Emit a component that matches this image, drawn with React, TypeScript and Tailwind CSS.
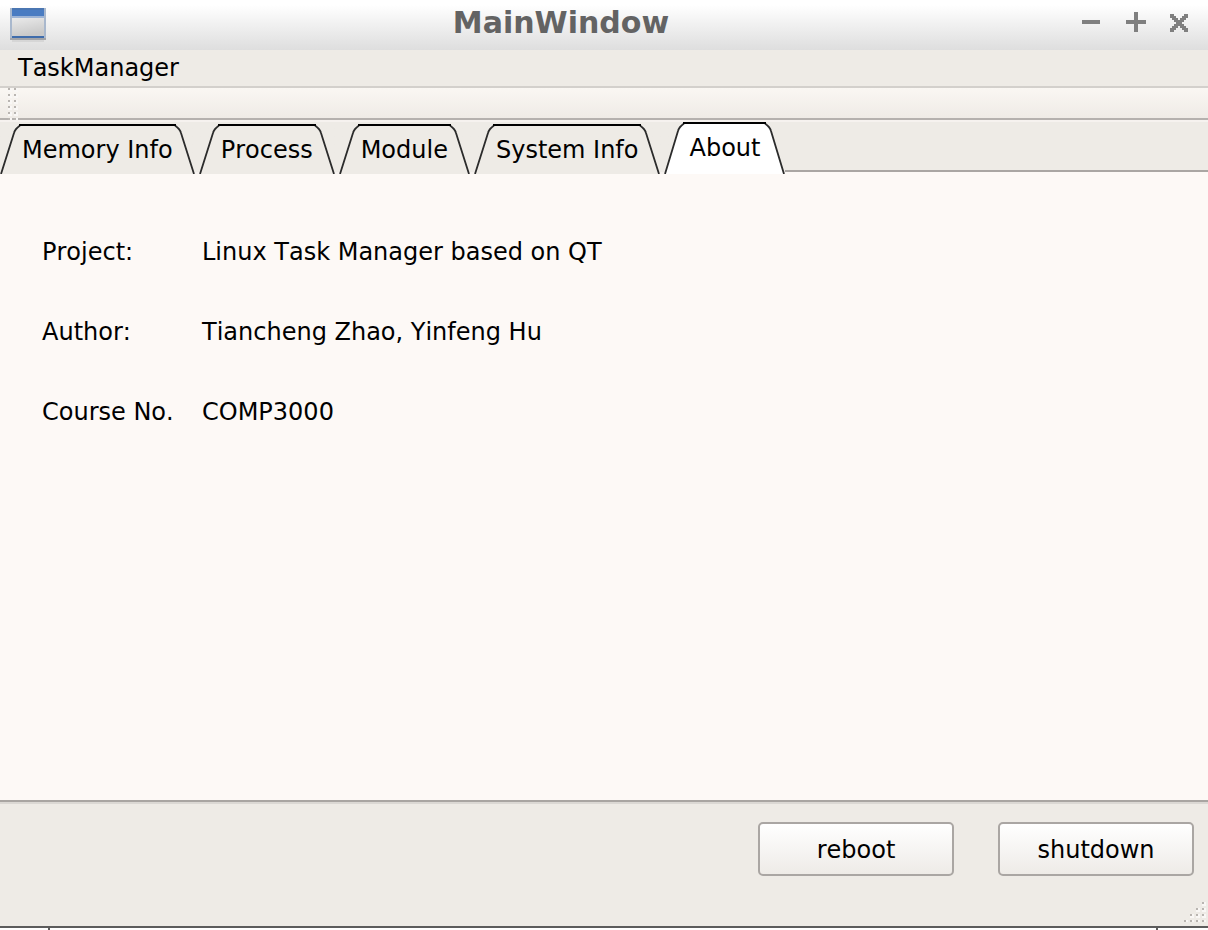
import { useState } from "react";

const TABS = ["Memory Info", "Process", "Module", "System Info", "About"];

const DETAILS = [
  { term: "Project:", value: "Linux Task Manager based on QT" },
  { term: "Author:", value: "Tiancheng Zhao, Yinfeng Hu" },
  { term: "Course No.", value: "COMP3000" },
];

function WindowIcon() {
  return (
    <svg width="36" height="34" viewBox="0 0 36 34" shapeRendering="crispEdges" aria-hidden="true">
      <defs>
        <linearGradient id="pane" x1="0" y1="0" x2="0.3" y2="1">
          <stop offset="0" stopColor="#eaeaea" />
          <stop offset="1" stopColor="#c9c9c9" />
        </linearGradient>
      </defs>
      <rect x="0" y="0" width="36" height="32" fill="#a9b8cd" />
      <rect x="2" y="0" width="32" height="2" fill="#4a76b2" />
      <rect x="2" y="2" width="32" height="6" fill="#4a7cc2" />
      <rect x="2" y="8" width="32" height="2" fill="#9db4d6" />
      <rect x="2" y="10" width="32" height="18" fill="url(#pane)" />
      <rect x="2" y="28" width="32" height="2" fill="#3f6cab" />
      <rect x="0" y="30" width="36" height="2" fill="#a2a4a8" />
      <rect x="2" y="32" width="32" height="2" fill="#d6d6d6" />
    </svg>
  );
}

function TabSlope({ selected, flip }: { selected: boolean; flip?: boolean }) {
  const h = selected ? 52 : 50;
  const fill = selected ? "#ffffff" : "#eeebe6";
  return (
    <svg width="22" height={h} viewBox={`0 0 22 ${h}`} className={flip ? "shrink-0 -scale-x-100" : "shrink-0"} aria-hidden="true">
      <path d={`M1 ${h} L14 8 Q15 5 20 1 H22 V${h} Z`} fill={fill} />
      <path d={`M1 ${h} L14 9 Q15 5 20 1.500`} fill="none" stroke="#2b2b2b" strokeWidth="1.8" />
      <path d="M19 1H22" stroke="#000" strokeWidth="2" />
    </svg>
  );
}

function Tab({ label, selected, onSelect }: { label: string; selected: boolean; onSelect: () => void }) {
  return (
    <button role="tab" aria-selected={selected} onClick={onSelect} className={selected ? "flex h-[52px]" : "flex h-[50px]"}>
      <TabSlope selected={selected} />
      <span
        className={
          selected
            ? "h-full whitespace-nowrap border-t-2 border-black bg-white px-[3px] leading-[48px]"
            : "h-full whitespace-nowrap border-t-2 border-black bg-[#eeebe6] leading-[48px]"
        }
      >
        {label}
      </span>
      <TabSlope selected={selected} flip />
    </button>
  );
}

function Dots({ points, width, height }: { points: number[][]; width: number; height: number }) {
  return (
    <svg width={width} height={height} shapeRendering="crispEdges" aria-hidden="true">
      {points.map(([x, y]) => (
        <g key={`${x}-${y}`}>
          <rect x={x} y={y} width="4" height="4" fill="#f9f7f5" />
          <rect x={x} y={y} width="2" height="2" fill="#b9b5b1" />
        </g>
      ))}
    </svg>
  );
}

const HANDLE = [0, 6, 12, 18, 24, 30].flatMap((y) => [[0, y], [6, y]]);
const SIZE_GRIP = [0, 1, 2, 3].flatMap((r) => [0, 1, 2, 3].filter((c) => c >= 3 - r).map((c) => [c * 6, r * 6]));

function FooterButton({ children }: { children: string }) {
  return (
    <button className="h-[54px] w-[196px] rounded-[5px] border-2 border-[#aaa6a3] bg-linear-to-b from-white to-[#eeebe7] pt-0.5 active:to-[#dedbd6]">
      {children}
    </button>
  );
}

export default function App() {
  const [active, setActive] = useState("About");

  return (
    <div className="flex min-h-screen flex-col bg-[#eeebe6] font-['DejaVu_Sans',sans-serif] text-[24px] leading-7 text-black [font-kerning:none]">
      <header className="flex h-[50px] items-center bg-linear-to-b from-white from-10% to-[#dedede] pl-[10px] pr-5">
        <WindowIcon />
        <h1 className="flex-1 pb-1 text-center text-[30px] font-bold leading-[46px] text-[#636363]">MainWindow</h1>
        <div className="flex items-center justify-end gap-6 pb-1.5 pl-1.5">
          <button aria-label="Minimize">
            <svg width="20" height="20" shapeRendering="crispEdges">
              <path d="M0 8H18V12H0Z" fill="#7f7f7f" />
            </svg>
          </button>
          <button aria-label="Maximize">
            <svg width="20" height="20" shapeRendering="crispEdges">
              <path d="M8 0H12V8H20V12H12V20H8V12H0V8H8Z" fill="#7f7f7f" />
            </svg>
          </button>
          <button aria-label="Close">
            <svg width="18" height="20" viewBox="0 0 18 20" shapeRendering="crispEdges">
              <path
                d="M0 2H4V4H6V6H8V8H10V6H12V4H14V2H18V6H16V8H14V10H12V12H14V14H16V16H18V20H14V18H12V16H10V14H8V16H6V18H4V20H0V16H2V14H4V12H6V10H4V8H2V6H0Z"
                fill="#7f7f7f"
              />
            </svg>
          </button>
        </div>
      </header>

      <nav className="flex h-[38px] items-start border-b-2 border-[#d3d0cc] px-[18px]">
        <button className="leading-9">TaskManager</button>
      </nav>

      <div className="h-8 border-b-2 border-[#b5b1ae] bg-linear-to-b from-[#faf7f3] to-[#efebe6] pl-2">
        <Dots points={HANDLE} width={10} height={32} />
      </div>

      <div className="flex h-[54px] border-t-2 border-[#f6f2ef]">
        <div role="tablist" aria-label="Sections" className="flex items-end gap-1 bg-linear-to-b from-[#eeebe6] from-[50px] to-[#f6f2ef] to-[50px]">
          {TABS.map((label) => (
            <Tab key={label} label={label} selected={label === active} onSelect={() => setActive(label)} />
          ))}
        </div>
        <div className="flex flex-1 flex-col justify-end">
          <div className="h-1 border-t-2 border-[#aaa6a3] bg-[#fdf9f6]" />
        </div>
      </div>

      <main role="tabpanel" aria-label={active} className="flex-1 border-b-2 border-[#a9a5a2] bg-[#fdf9f6] px-[42px] pt-16">
        {active === "About" && (
          <dl className="grid grid-cols-[160px_1fr] gap-y-[52px]">
            {DETAILS.map(({ term, value }) => (
              <div key={term} className="contents">
                <dt>{term}</dt>
                <dd>{value}</dd>
              </div>
            ))}
          </dl>
        )}
      </main>

      <footer className="border-b-2 border-t-2 border-b-[#5c5c5c] border-t-[#dbd8d4]">
        <div className="flex justify-end gap-11 pr-[14px] pt-[18px]">
          <FooterButton>reboot</FooterButton>
          <FooterButton>shutdown</FooterButton>
        </div>
        <div className="flex justify-end pb-1 pr-0.5 pt-[26px]">
          <Dots points={SIZE_GRIP} width={22} height={20} />
        </div>
      </footer>
      <div className="flex h-0.5 justify-between bg-white pl-12 pr-[50px]">
        <span className="w-0.5 bg-[#5c5c5c]" />
        <span className="w-0.5 bg-[#5c5c5c]" />
      </div>
    </div>
  );
}
